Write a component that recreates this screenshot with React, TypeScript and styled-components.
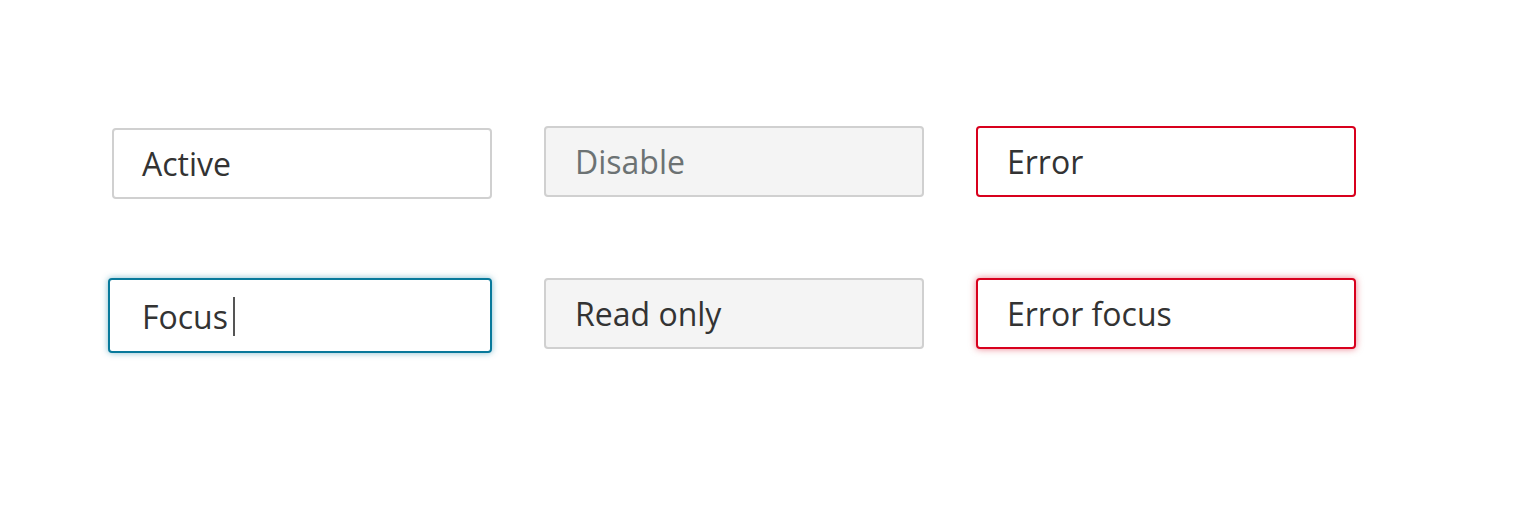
import React from "react";
import styled, { createGlobalStyle, css } from "styled-components";

const Global = createGlobalStyle`
  html, body { margin: 0; padding: 0; background: #ffffff; }
  body { font-family: "Open Sans", "Noto Sans", sans-serif; }
`;

type Variant = "active" | "focus" | "disabled" | "readonly" | "error" | "errorFocus";

const Page = styled.div`
  width: 1520px;
  height: 510px;
  box-sizing: border-box;
  padding: 126px 0 0 112px;
`;

const Grid = styled.div`
  display: grid;
  grid-template-columns: repeat(3, 380px);
  grid-auto-rows: 71px;
  column-gap: 52px;
  row-gap: 81px;
`;

const variants: Record<Variant, ReturnType<typeof css>> = {
  active: css`
    border: 2px solid #d0d0d0;
    background: #ffffff;
    color: #333333;
    margin-top: 2px;
    padding-left: 28px;
  `,
  focus: css`
    border: 2px solid #08799b;
    background: #ffffff;
    color: #333333;
    margin-left: -4px;
    width: 384px;
    height: 75px;
    padding-left: 32px;
    padding-top: 2px;
    box-shadow: 0 0 6px rgba(8, 121, 155, 0.5);
  `,
  disabled: css`
    border: 2px solid #d0d0d0;
    background: #f4f4f4;
    color: #6c7273;
  `,
  readonly: css`
    border: 2px solid #d0d0d0;
    background: #f4f4f4;
    color: #333333;
  `,
  error: css`
    border: 2px solid #d8001d;
    background: #ffffff;
    color: #333333;
  `,
  errorFocus: css`
    border: 2px solid #d8001d;
    background: #ffffff;
    color: #333333;
    box-shadow: 0 0 7px rgba(216, 0, 29, 0.5);
  `,
};

const Field = styled.div<{ $variant: Variant }>`
  box-sizing: border-box;
  width: 380px;
  height: 71px;
  border-radius: 4px;
  display: flex;
  align-items: center;
  padding-left: 29px;
  padding-top: 1px;
  font-size: 32px;
  line-height: 1;
  ${(p) => variants[p.$variant]}
`;

const Caret = styled.span`
  display: inline-block;
  width: 2px;
  height: 39px;
  background: #555;
  margin-left: 5px;
`;

const fields: { label: string; variant: Variant }[] = [
  { label: "Active", variant: "active" },
  { label: "Disable", variant: "disabled" },
  { label: "Error", variant: "error" },
  { label: "Focus", variant: "focus" },
  { label: "Read only", variant: "readonly" },
  { label: "Error focus", variant: "errorFocus" },
];

export default function App() {
  return (
    <>
      <Global />
      <Page>
        <Grid>
          {fields.map((f) => (
            <Field key={f.label} $variant={f.variant}>
              <span>{f.label}</span>
              {f.variant === "focus" && <Caret />}
            </Field>
          ))}
        </Grid>
      </Page>
    </>
  );
}
